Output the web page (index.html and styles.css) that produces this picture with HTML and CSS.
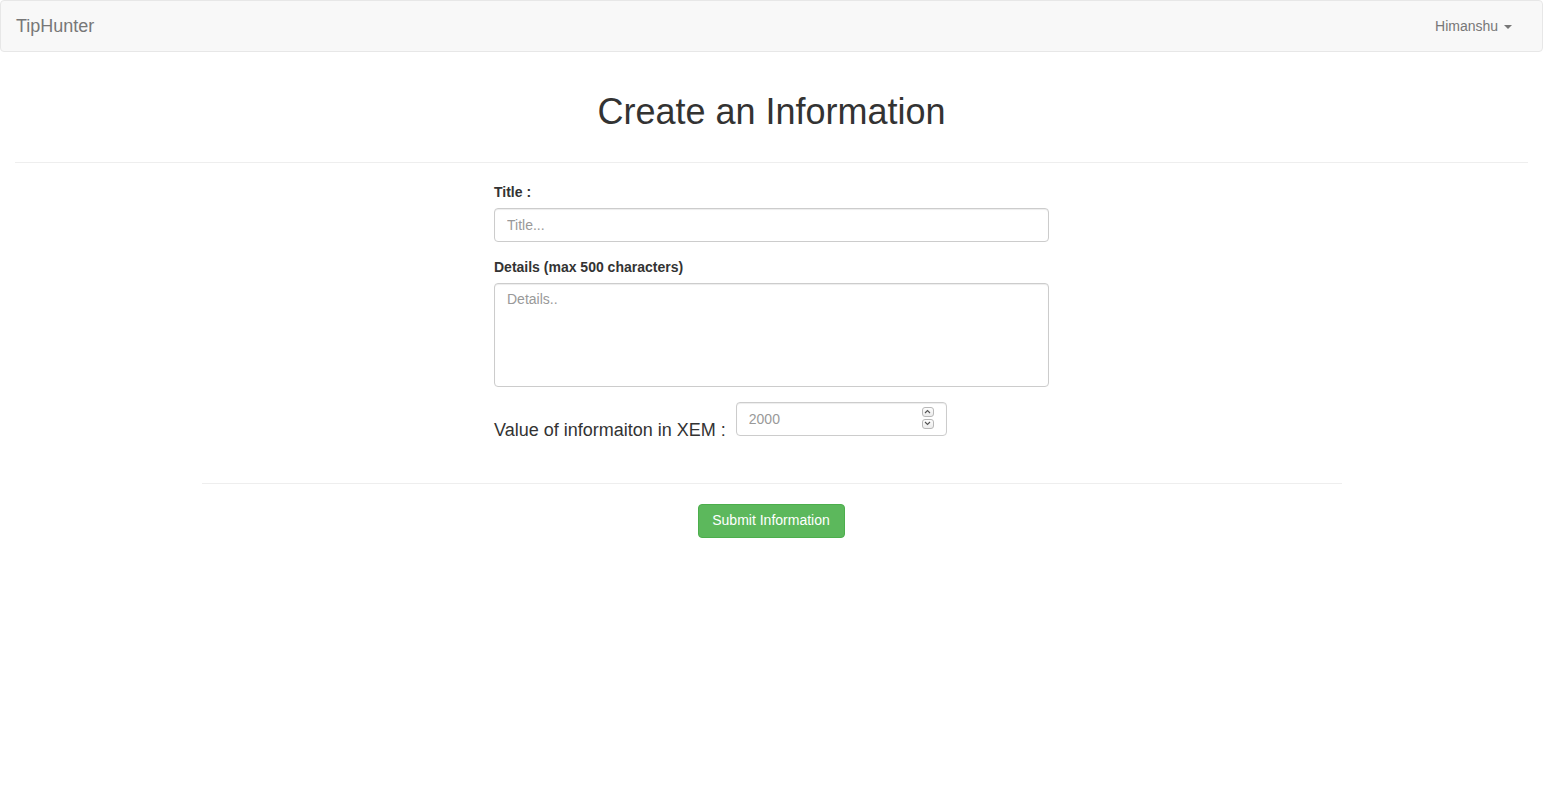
FILE: index.html
```html
<!DOCTYPE html>
<html>
<head>
<meta charset="utf-8">
<title>TipHunter</title>
<link rel="stylesheet" href="styles.css">
</head>
<body>
<nav class="navbar">
  <a class="brand" href="#">TipHunter</a>
  <a class="user" href="#">Himanshu <span class="caret"></span></a>
</nav>
<div class="page">
  <h1 class="heading">Create an Information</h1>
  <hr class="rule-wide">
  <form class="form">
    <div class="group group-first">
      <label class="label" for="title">Title :</label>
      <input class="control" id="title" type="text" placeholder="Title...">
    </div>
    <div class="group">
      <label class="label" for="details">Details (max 500 characters)</label>
      <textarea class="control area" id="details" placeholder="Details.."></textarea>
    </div>
    <div class="value-row">
      <label class="value-label" for="value">Value of informaiton in XEM :</label>
      <div class="number-wrap">
        <input class="control number" id="value" type="number" placeholder="2000">
        <span class="spinner" aria-hidden="true">
          <span class="spin-btn">
            <svg width="7" height="5" viewBox="0 0 7 5"><path d="M1 4 L3.5 1.5 L6 4" fill="none" stroke="#555" stroke-width="1.1"/></svg>
          </span>
          <span class="spin-btn">
            <svg width="7" height="5" viewBox="0 0 7 5"><path d="M1 1 L3.5 3.5 L6 1" fill="none" stroke="#555" stroke-width="1.1"/></svg>
          </span>
        </span>
      </div>
    </div>
  </form>
  <div class="footer">
    <hr class="rule-narrow">
    <button class="btn-submit" type="button">Submit Information</button>
  </div>
</div>
</body>
</html>
```
FILE: styles.css
```css
* { box-sizing: border-box; }
html, body { margin: 0; padding: 0; }
body {
  font-family: "Liberation Sans", Arial, sans-serif;
  font-size: 14px;
  line-height: 1.42857;
  color: #333;
  background: #fff;
}
.navbar {
  height: 52px;
  background: #f8f8f8;
  border: 1px solid #e7e7e7;
  border-radius: 4px;
  display: flex;
  align-items: center;
  justify-content: space-between;
  margin-bottom: 20px;
}
.brand {
  font-size: 18px;
  line-height: 20px;
  color: #777;
  text-decoration: none;
  padding: 15px;
}
.user {
  color: #777;
  text-decoration: none;
  font-size: 14px;
  line-height: 20px;
  padding: 15px;
  margin-right: 15px;
}
.caret {
  display: inline-block;
  width: 0;
  height: 0;
  margin-left: 2px;
  vertical-align: middle;
  border-top: 4px solid #777;
  border-left: 4px solid transparent;
  border-right: 4px solid transparent;
}
.page { padding: 0 15px; }
.heading {
  font-family: "Liberation Sans", Arial, sans-serif;
  font-weight: 500;
  font-size: 36px;
  line-height: 1.1;
  text-align: center;
  margin: 40px 0 20px;
  color: #333;
}
hr {
  border: 0;
  border-top: 1px solid #eee;
  margin: 20px 0;
}
.rule-wide { margin-top: 30px; }
.form {
  width: 555px;
  margin: 0 auto;
}
.group { margin-bottom: 15px; }
.group-first { margin-bottom: 16px; }
.label {
  display: block;
  font-weight: bold;
  margin-bottom: 5px;
}
.control {
  display: block;
  width: 100%;
  height: 34px;
  padding: 6px 12px;
  font-family: "Liberation Sans", Arial, sans-serif;
  font-size: 14px;
  line-height: 1.42857;
  color: #555;
  background: #fff;
  border: 1px solid #ccc;
  border-radius: 4px;
  box-shadow: inset 0 1px 1px rgba(0,0,0,.075);
}
.control::placeholder { color: #999; }
.area { height: 104px; resize: none; }
.value-row {
  display: flex;
  align-items: flex-start;
  gap: 10px;
}
.value-label {
  font-size: 18px;
  line-height: 20px;
  padding-top: 18px;
}
.number-wrap {
  position: relative;
  width: 211px;
}
.number { -moz-appearance: textfield; padding-right: 30px; }
.number::-webkit-inner-spin-button,
.number::-webkit-outer-spin-button { -webkit-appearance: none; margin: 0; }
.spinner {
  position: absolute;
  right: 13px;
  top: 5px;
  display: flex;
  flex-direction: column;
  gap: 2px;
}
.spin-btn {
  width: 12px;
  height: 10px;
  border: 1px solid #b8b8b8;
  border-radius: 3px;
  background: linear-gradient(#fdfdfd, #ececec);
  display: flex;
  align-items: center;
  justify-content: center;
}
.spin-btn svg { display: block; }
.footer {
  width: 1140px;
  margin: 43px auto 0;
  text-align: center;
}
.rule-narrow { margin: 0 0 20px; }
.btn-submit {
  font-family: "Liberation Sans", Arial, sans-serif;
  font-size: 14px;
  line-height: 1.42857;
  padding: 6px 14px 6px 13px;
  height: 34px;
  color: #fff;
  background: #5cb85c;
  border: 1px solid #4cae4c;
  border-radius: 4px;
  cursor: pointer;
}
```
